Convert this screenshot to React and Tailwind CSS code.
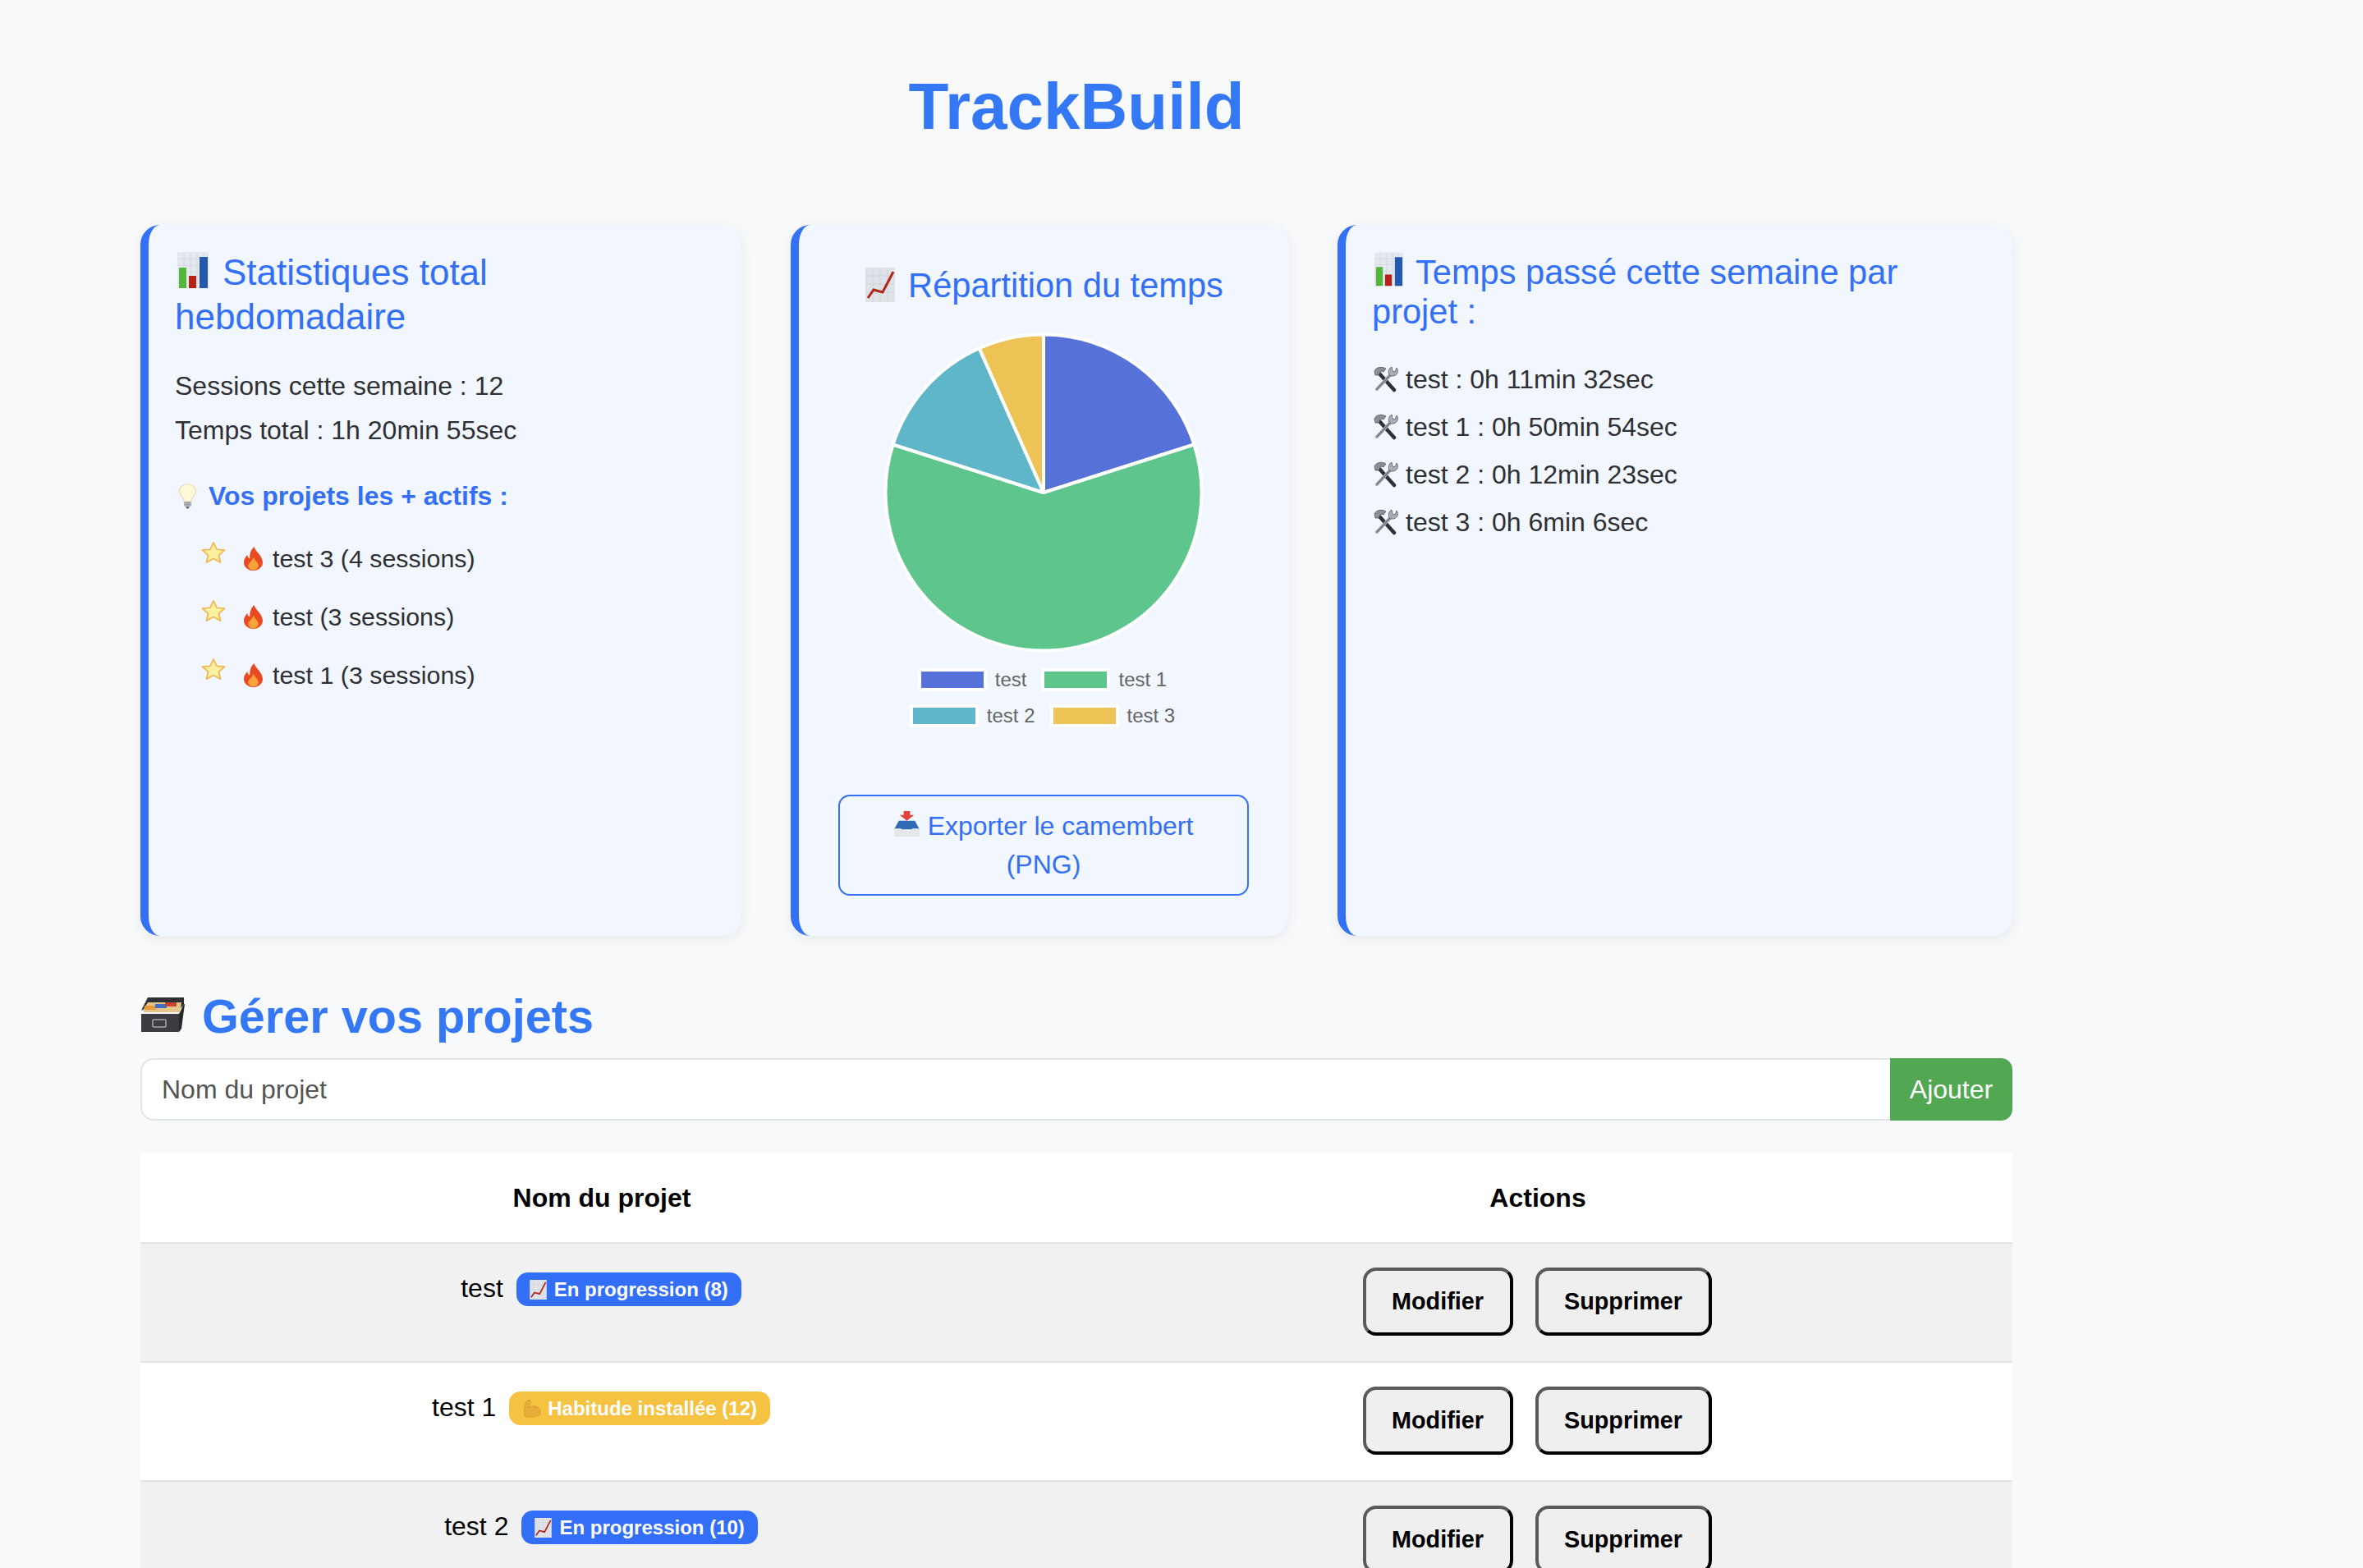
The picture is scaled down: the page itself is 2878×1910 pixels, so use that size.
import React from "react";

function Bars({ className }) {
  return (
    <svg viewBox="0 0 38 44" className={className}>
      <rect width="38" height="44" fill="#e4e9ef" />
      <path d="M0 8H38M0 16H38M0 24H38M0 32H38M8 0V44M16 0V44M24 0V44M32 0V44" stroke="#cfd6de" strokeWidth="0.8" />
      <rect x="2" y="19" width="9" height="25" fill="#55b43a" />
      <rect x="14" y="29" width="9" height="15" fill="#b52318" />
      <rect x="27" y="6" width="10" height="38" fill="#2459b0" />
    </svg>
  );
}

function ChartUp({ className }) {
  return (
    <svg viewBox="0 0 36 42" className={className}>
      <rect width="36" height="42" fill="#dfe3e8" />
      <path d="M0 10H36M0 20H36M0 30H36M9 0V42M18 0V42M27 0V42" stroke="#cdd3da" strokeWidth="0.8" />
      <path d="M3 37 L10 27 L21 30 L34 5" fill="none" stroke="#b3261c" strokeWidth="3" />
    </svg>
  );
}

function Bulb({ className }) {
  return (
    <svg viewBox="0 0 24 38" preserveAspectRatio="none" className={className}>
      <path d="M12 1C5.500 1 1.500 6 1.500 11.500C1.500 17.500 7 20 7.500 27H16.500C17 20 22.500 17.500 22.500 11.500C22.500 6 18.500 1 12 1Z" fill="#fdf8d8" stroke="#e8dcae" strokeWidth="1.200" />
      <rect x="7.500" y="27" width="9" height="7" rx="1.500" fill="#a5a8ac" />
      <path d="M9.500 34.500H14.500L13 37.500H11Z" fill="#55585c" />
    </svg>
  );
}

function Star({ className }) {
  return (
    <svg viewBox="0 0 30 30" preserveAspectRatio="none" className={className}>
      <path d="M15 2L19 11L28.500 12L21.500 18.500L23.500 28L15 23L6.500 28L8.500 18.500L1.500 12L11 11Z" fill="#fdf0a0" stroke="#f0b850" strokeWidth="1.800" strokeLinejoin="round" />
    </svg>
  );
}

function Fire({ className }) {
  return (
    <svg viewBox="0 0 24 32" preserveAspectRatio="none" className={className}>
      <path d="M13 0C14 6 22 11 23 20C23.500 27 18 32 12 32C6 32 0.500 27 1 20C1.300 16 3.500 13 5 11C5.500 14 6.500 15.500 8 16C7.500 10 9 4 13 0Z" fill="#ea4a22" />
      <path d="M12.500 14C13 18 18 21 18 25.500C18 29 15 31.500 12 31.500C9 31.500 6 29 6 25.500C6 22 10.500 19 12.500 14Z" fill="#f9a33a" />
    </svg>
  );
}

function Tools({ className }) {
  return (
    <svg viewBox="0 0 32 32" className={className}>
      <path d="M9 9L27 29" stroke="#2f3134" strokeWidth="4.500" strokeLinecap="round" />
      <path d="M3 6C5 1 12 0 17 3L14 7L11 6L8 11L4 11Z" fill="#8a8f95" stroke="#55585c" strokeWidth="0.800" />
      <path d="M23 10L6 28" stroke="#9ca1a7" strokeWidth="4" strokeLinecap="round" />
      <path d="M6 28L23 10" stroke="#55585c" strokeWidth="1" />
      <path d="M22 12C19 8 20 3 24 1L25 6L28 7L30 2C33 6 31 11 26 12Z" fill="#a9aeb4" stroke="#55585c" strokeWidth="0.800" />
    </svg>
  );
}

function CardBox({ className }) {
  return (
    <svg viewBox="0 0 54 42" className={className}>
      <path d="M9 0H53L53 8L48 14H5L1 16Z" fill="#2f3033" />
      <path d="M4 14L9 6H50L48 18H4Z" fill="#e9c48a" />
      <rect x="5" y="10" width="14" height="5" fill="#e99b3d" />
      <rect x="18" y="8" width="14" height="5" fill="#3f6fc4" />
      <rect x="30" y="6" width="14" height="5" fill="#c9412f" />
      <path d="M1 20H48L52 8L54 8L50 20L47 42H1Z" fill="#3c3d40" />
      <path d="M47 20L54 8L50 38L47 42Z" fill="#27282a" />
      <rect x="15" y="27" width="16" height="9" rx="1" fill="none" stroke="#a4a6a9" strokeWidth="1.600" />
    </svg>
  );
}

function Inbox({ className }) {
  return (
    <svg viewBox="0 0 32 32" className={className}>
      <path d="M12 0H20V5H25L16 12L7 5H12Z" fill="#e2423a" />
      <path d="M6 12H26L32 23H0Z" fill="#2f6cb5" />
      <path d="M0 22H9C10 26 22 26 23 22H32V31C32 31.600 31.600 32 31 32H1C0.400 32 0 31.600 0 31Z" fill="#e4e6ea" />
    </svg>
  );
}

function Muscle({ className }) {
  return (
    <svg viewBox="0 0 24 24" className={className}>
      <path d="M5 3L9 1L11 5L9 6L8 11C11 8.500 15 8 18 10C22 12 23 15 22 19C18 22 9 23 3 21C2 15 3 9 5 3Z" fill="#e6ad3a" stroke="#d3992e" strokeWidth="0.800" />
    </svg>
  );
}

const CX = 200;
const CY = 196;
const R = 192.5;
function pt(deg) {
  const a = ((deg - 90) * Math.PI) / 180;
  return [CX + R * Math.cos(a), CY + R * Math.sin(a)];
}
function slice(a, b) {
  const [x1, y1] = pt(a);
  const [x2, y2] = pt(b);
  const large = b - a > 180 ? 1 : 0;
  return `M${CX} ${CY}L${x1} ${y1}A${R} ${R} 0 ${large} 1 ${x2} ${y2}Z`;
}

function Pie() {
  const slices = [
    [0, 72.3, "#5672d8"],
    [72.3, 287.7, "#5ec68d"],
    [287.7, 336, "#5fb6c9"],
    [336, 360, "#eec356"],
  ];
  return (
    <svg viewBox="0 0 400 392" className="w-[400px] h-[392px] block">
      {slices.map(([a, b, c]) => (
        <path key={c} d={slice(a, b)} fill={c} stroke="#ffffff" strokeWidth="4" strokeLinejoin="round" />
      ))}
    </svg>
  );
}

function Legend({ items }) {
  return (
    <div className="flex justify-center gap-[18px] h-[28px]">
      {items.map(([label, color]) => (
        <div key={label} className="flex items-center gap-[10px]">
          <span className={`w-[84px] h-[28px] border-[4px] border-white ${color}`} />
          <span className="text-[24px] leading-[28px] text-[#666666]">{label}</span>
        </div>
      ))}
    </div>
  );
}

function Badge({ kind, n }) {
  const prog = kind === "prog";
  return (
    <span className={`ml-[16px] mt-[-1px] inline-flex items-center h-[41px] px-[16px] rounded-[14px] text-[24px] font-bold text-white ${prog ? "bg-[#336ef6]" : "bg-[#f5c242]"}`}>
      {prog ? <ChartUp className="w-[21px] h-[24px] mr-[9px]" /> : <Muscle className="w-[24px] h-[24px] mr-[7px]" />}
      {prog ? `En progression (${n})` : `Habitude installée (${n})`}
    </span>
  );
}

function ActionBtn({ children, w }) {
  return (
    <button className={`h-[83px] ${w} rounded-[16px] border-[4px] border-t-[#5a5a5a] border-l-[#5a5a5a] border-b-black border-r-black bg-[#efefef] text-[28.8px] font-bold text-black`}>
      {children}
    </button>
  );
}

function Row({ name, kind, n, odd }) {
  return (
    <tr className={`${odd ? "bg-[#f1f1f1]" : "bg-white"} border-b-[2px] border-[#e1e4e8]`}>
      <td className="h-[145px] p-0 align-top">
        <div className="flex justify-center items-start pt-[36px] pr-[4px]">
          <span className="text-[32px] leading-[37px] text-black">{name}</span>
          <Badge kind={kind} n={n} />
        </div>
      </td>
      <td className="h-[145px] p-0 align-top">
        <div className="flex justify-center gap-[27px] pt-[29px] pr-[4px]">
          <ActionBtn w="w-[183px]">Modifier</ActionBtn>
          <ActionBtn w="w-[215px]">Supprimer</ActionBtn>
        </div>
      </td>
    </tr>
  );
}

const cardBase = "rounded-[24px] border-l-[10px] border-[#3370f5] bg-[#f1f6ff] shadow-[0_4px_16px_rgba(0,0,0,0.07)]";

export default function App() {
  return (
    <div className="h-[1910px] overflow-hidden bg-[#f8f9fb] font-['Liberation_Sans',Arial,sans-serif] text-[#2f3033]">
      <div className="w-[2280px] ml-[171px]">
        <h1 className="pt-[84px] pb-[98px] text-center text-[80px] leading-[92px] font-bold text-[#3478f6]">TrackBuild</h1>

        <div className="flex gap-[60px] h-[866px] items-stretch">
          <section className={`w-[732px] pt-[31px] pl-[32px] pr-[32px] ${cardBase}`}>
            <h2 className="text-[44px] leading-[54px] text-[#3370f5]">
              <Bars className="inline-block w-[38px] h-[44px] align-[-4px] ml-[3px] mr-[17px]" />
              Statistiques total hebdomadaire
            </h2>
            <p className="mt-[30px] text-[32px] leading-[54px]">Sessions cette semaine : 12</p>
            <p className="text-[32px] leading-[54px]">Temps total : 1h 20min 55sec</p>
            <h3 className="mt-[26px] flex items-center text-[32px] leading-[54px] font-bold text-[#3370f5]">
              <Bulb className="w-[23px] h-[31px] ml-[4px] mr-[14px]" />
              Vos projets les + actifs :
            </h3>
            <ul className="mt-[22px] pl-[32px] flex flex-col gap-[17px]">
              {["test 3 (4 sessions)", "test (3 sessions)", "test 1 (3 sessions)"].map((t) => (
                <li key={t} className="flex items-center h-[54px] text-[30.4px] leading-[54px]">
                  <Star className="w-[30px] h-[28px] -mt-[15px] mr-[21px]" />
                  <Fire className="w-[25px] h-[29px] mr-[11px]" />
                  {t}
                </li>
              ))}
            </ul>
          </section>

          <section className={`w-[606px] flex flex-col items-center ${cardBase}`}>
            <h2 className="mt-[50px] ml-[2px] h-[48px] text-[41.6px] leading-[48px] text-[#3370f5]">
              <ChartUp className="inline-block w-[36px] h-[42px] align-[-6px] mr-[16px]" />
              Répartition du temps
            </h2>
            <div className="mt-[32px]"><Pie /></div>
            <div className="mt-[18px] mr-[3px] flex flex-col gap-[16px]">
              <Legend items={[["test", "bg-[#5672d8]"], ["test 1", "bg-[#5ec68d]"]]} />
              <Legend items={[["test 2", "bg-[#5fb6c9]"], ["test 3", "bg-[#eec356]"]]} />
            </div>
            <button className="mt-[82px] w-[500px] h-[123px] rounded-[14px] border-[2px] border-[#3370f5] text-[32px] leading-[47px] text-[#3370f5] text-center px-[32px]">
              <Inbox className="inline-block w-[31px] h-[31px] align-[-2px] mr-[10px]" />
              Exporter le camembert (PNG)
            </button>
          </section>

          <section className={`w-[822px] pt-[33px] pl-[32px] pr-[32px] ${cardBase}`}>
            <h2 className="text-[41.6px] leading-[48px] text-[#3370f5]">
              <Bars className="inline-block w-[35px] h-[42px] align-[-3px] ml-[3px] mr-[15px]" />
              Temps passé cette semaine par projet :
            </h2>
            <ul className="mt-[31px] flex flex-col gap-[4px]">
              {["test : 0h 11min 32sec", "test 1 : 0h 50min 54sec", "test 2 : 0h 12min 23sec", "test 3 : 0h 6min 6sec"].map((t) => (
                <li key={t} className="flex items-center h-[54px] text-[32px] leading-[54px]">
                  <Tools className="w-[32px] h-[32px] mr-[9px]" />
                  {t}
                </li>
              ))}
            </ul>
          </section>
        </div>

        <h2 className="mt-[65px] flex items-center h-[66px] text-[57.6px] leading-[66px] font-bold text-[#3478f6]">
          <CardBox className="w-[54px] h-[42px] mr-[21px] -mt-[4px]" />
          Gérer vos projets
        </h2>

        <div className="mt-[18px] flex h-[76px]">
          <input
            placeholder="Nom du projet"
            className="flex-1 h-full px-[24px] bg-white border-[2px] border-r-0 border-[#e1e4e8] rounded-l-[16px] text-[32px] outline-none placeholder:text-[#555555]"
          />
          <button className="w-[149px] h-full rounded-r-[14px] bg-[#52a752] text-white text-[32px]">Ajouter</button>
        </div>

        <table className="mt-[40px] w-full table-fixed border-collapse">
          <colgroup>
            <col className="w-[1126px]" />
            <col />
          </colgroup>
          <thead>
            <tr className="bg-white border-b-[2px] border-[#e1e4e8]">
              <th className="h-[109px] p-0 pr-[2px] text-[32px] font-bold text-black">Nom du projet</th>
              <th className="h-[109px] p-0 pr-[2px] text-[32px] font-bold text-black">Actions</th>
            </tr>
          </thead>
          <tbody>
            <Row name="test" kind="prog" n={8} odd />
            <Row name="test 1" kind="hab" n={12} />
            <Row name="test 2" kind="prog" n={10} odd />
          </tbody>
        </table>
      </div>
    </div>
  );
}
